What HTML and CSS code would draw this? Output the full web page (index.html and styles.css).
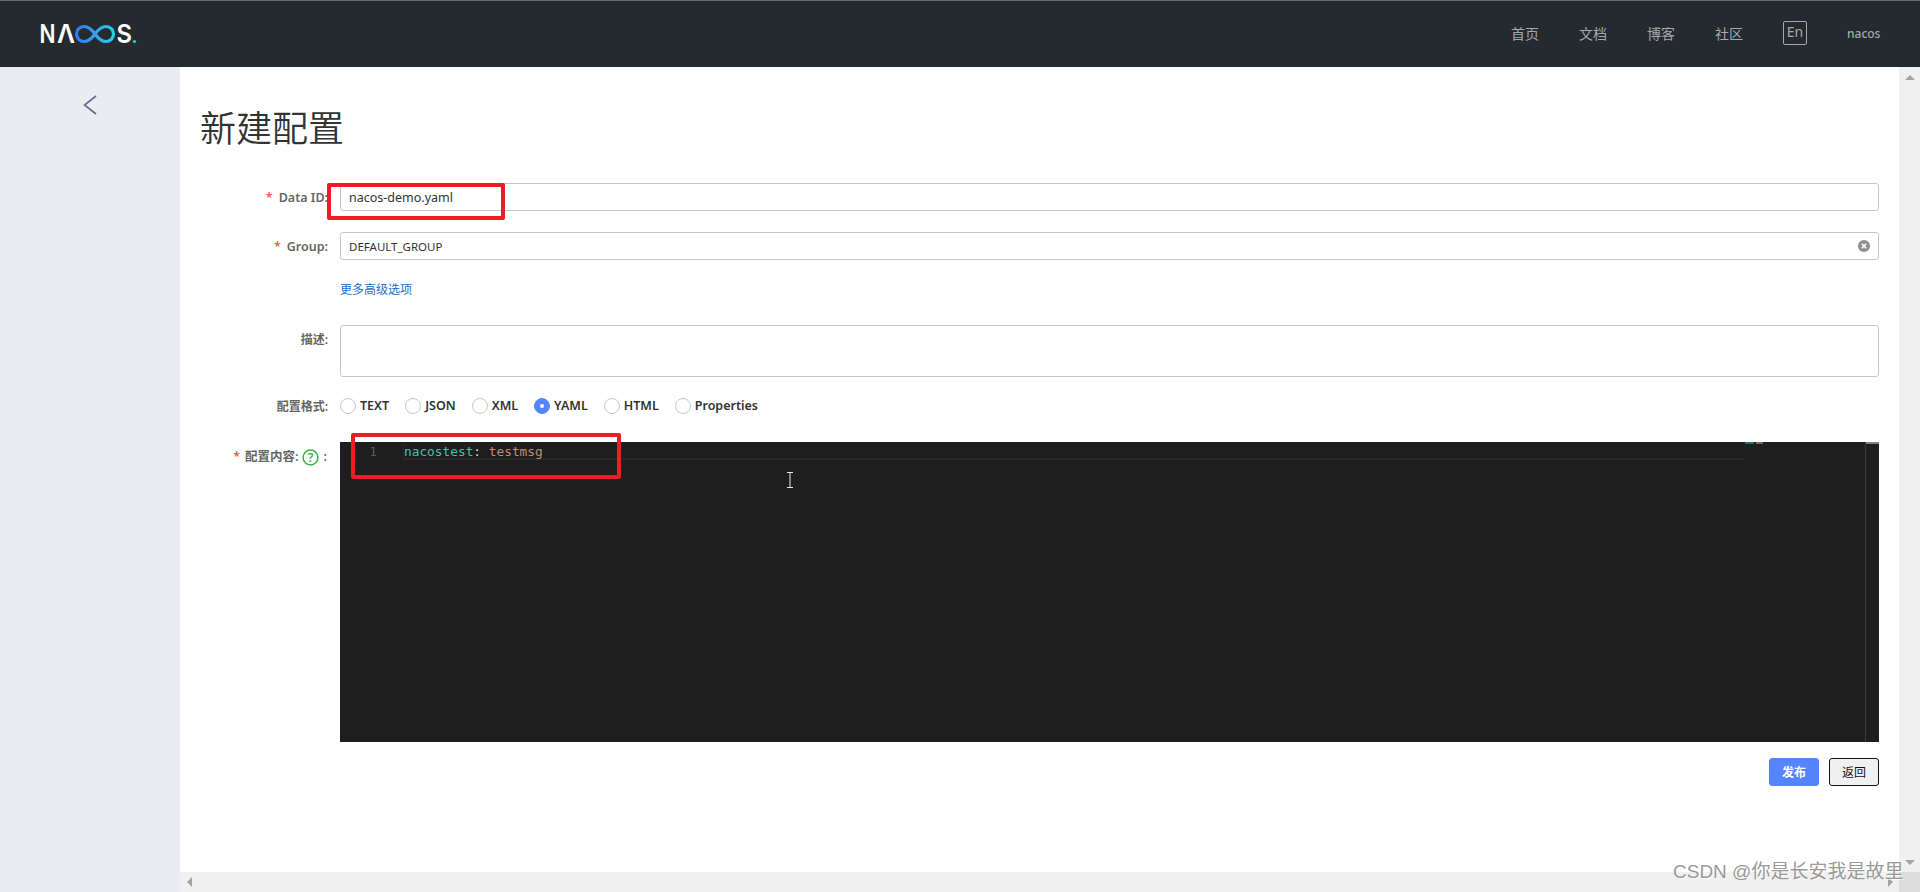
FILE: index.html
```html
<!DOCTYPE html>
<html lang="zh-CN">
<head>
<meta charset="utf-8">
<title>新建配置</title>
<link rel="stylesheet" href="styles.css">
</head>
<body>
<div class="page">
  <header class="topbar">
    <svg class="logo" width="100" height="36" viewBox="38 15 100 36" role="img" aria-label="NACOS">
      <defs>
        <linearGradient id="loop" x1="0" y1="0" x2="1" y2="0">
          <stop offset="0" stop-color="#2f7bf0"/>
          <stop offset="0.55" stop-color="#36a4f2"/>
          <stop offset="1" stop-color="#1fd3ee"/>
        </linearGradient>
      </defs>
      <text class="logo-letter" x="39.500" y="42" textLength="16" lengthAdjust="spacingAndGlyphs">N</text>
      <text class="logo-letter" x="57" y="42" textLength="18" lengthAdjust="spacingAndGlyphs">Λ</text>
      <path d="M95 33C91 27.500 87.500 25.500 84 25.500a7.500 7.500 0 0 0 0 15C87.500 40.500 91 38.500 95 33C99 27.500 102.500 25.500 106 25.500a7.500 7.500 0 0 1 0 15C102.500 40.500 99 38.500 95 33" fill="none" stroke="url(#loop)" stroke-width="3.200"/>
      <text class="logo-letter" x="116.500" y="42" textLength="15.500" lengthAdjust="spacingAndGlyphs">S</text>
      <circle cx="134.500" cy="40.500" r="1.600" fill="#1fd3ee"/>
    </svg>
    <nav class="nav">
      <a class="nav-link">首页</a>
      <a class="nav-link">文档</a>
      <a class="nav-link">博客</a>
      <a class="nav-link">社区</a>
      <a class="lang">En</a>
      <span class="user">nacos</span>
    </nav>
  </header>

  <div class="body">
    <aside class="sidebar">
      <svg class="back" width="14" height="20" viewBox="0 0 14 20"><polyline points="13,1 1.500,10 13,19" fill="none" stroke="#5f6f88" stroke-width="1.600"/></svg>
    </aside>

    <div class="center">
      <main class="content">
        <h1 class="title">新建配置</h1>
        <form class="form">
          <div class="row row-data">
            <label class="label"><span class="req">*</span>Data ID:</label>
            <div class="input input-lower">nacos-demo.yaml</div>
          </div>
          <div class="row row-group">
            <label class="label"><span class="req">*</span>Group:</label>
            <div class="input input-upper">DEFAULT_GROUP
              <svg class="clear" width="12" height="12" viewBox="0 0 12 12"><circle cx="6" cy="6" r="6" fill="#8f8f8f"/><path d="M3.800 3.800l4.400 4.400M8.200 3.800l-4.400 4.400" stroke="#fff" stroke-width="1.600"/></svg>
            </div>
          </div>
          <div class="row row-link">
            <span class="label"></span>
            <a class="more">更多高级选项</a>
          </div>
          <div class="row row-desc">
            <label class="label label-top">描述:</label>
            <div class="input input-area"></div>
          </div>
          <div class="row row-format">
            <label class="label label-format">配置格式:</label>
            <div class="radios">
              <span class="radio"><i class="dot"></i>TEXT</span>
              <span class="radio"><i class="dot"></i>JSON</span>
              <span class="radio"><i class="dot"></i>XML</span>
              <span class="radio"><i class="dot dot-on"></i>YAML</span>
              <span class="radio"><i class="dot"></i>HTML</span>
              <span class="radio"><i class="dot"></i>Properties</span>
            </div>
          </div>
          <div class="row row-editor">
            <label class="label label-editor"><span class="req">*</span>配置内容:
              <svg class="help" width="17" height="17" viewBox="0 0 17 17"><circle cx="8.500" cy="8.500" r="7.400" fill="#fff" stroke="#35b34a" stroke-width="1.500"/><text class="help-q" x="8.500" y="13" text-anchor="middle">?</text></svg>
              <span class="colon">:</span>
            </label>
            <div class="editor">
              <div class="gutter">1</div>
              <div class="lines">
                <div class="line"><span class="k">nacostest</span><span class="p">:</span> <span class="v">testmsg</span></div>
              </div>
              <div class="minimap"><i class="mini mini-k"></i><i class="mini mini-v"></i></div>
              <div class="vbar"><i class="vbar-thumb"></i></div>
              <svg class="ibeam" width="8" height="16" viewBox="0 0 8 16"><path d="M1 .5h6M4 .5v15M1 15.500h6" stroke="#e8e8e8" stroke-width="1" fill="none"/></svg>
            </div>
          </div>
          <div class="actions">
            <button type="button" class="btn btn-primary">发布</button>
            <button type="button" class="btn btn-back">返回</button>
          </div>
        </form>
      </main>
      <div class="hscroll">
        <i class="arrow arrow-left"></i>
        <i class="arrow arrow-right"></i>
      </div>
    </div>

    <div class="vscroll">
      <div class="vscroll-track">
        <i class="arrow arrow-up"></i>
        <i class="arrow arrow-down"></i>
      </div>
      <div class="corner"></div>
    </div>
  </div>

  <div class="mark mark-id"></div>
  <div class="mark mark-code"></div>
  <div class="watermark">CSDN @你是长安我是故里</div>
</div>
</body>
</html>
```

FILE: styles.css
```css
* { box-sizing: border-box; }
html, body { margin: 0; padding: 0; height: 100%; overflow: hidden; }
body { font-family: "Noto Sans", "Noto Sans CJK SC", sans-serif; font-size: 12px; color: #333; background: #fff; }

.page { position: relative; width: 1920px; height: 892px; display: flex; flex-direction: column; overflow: hidden; }

.topbar { flex: 0 0 67px; display: flex; align-items: center; justify-content: space-between; padding: 0 40px 0 38px; background: #252a2f; border-top: 1px solid #6a6a6a; }
.logo { display: block; margin-top: -1px; }
.logo-letter { font-family: "Inter", "Noto Sans", sans-serif; font-size: 25px; font-weight: 600; fill: #fff; }
.nav { display: flex; align-items: center; gap: 40px; color: #a6a8a9; }
.nav-link { font-size: 14px; line-height: 20px; }
.lang { width: 24px; height: 24px; border: 1px solid #a6a8a9; border-radius: 2px; font-size: 14px; line-height: 20px; text-align: center; margin-top: -3px; }
.user { font-size: 12px; line-height: 20px; width: 33px; font-weight: 500; }

.body { flex: 1; display: flex; min-height: 0; }
.sidebar { flex: 0 0 180px; background: #eaecf1; display: flex; justify-content: center; align-items: flex-start; padding: 28px 0 0 0; }
.back { display: block; }

.center { flex: 1; min-width: 0; display: flex; flex-direction: column; }
.content { flex: 1; padding: 37px 20px 0 20px; background: #fff; }
.title { margin: 0 0 29px 0; font-size: 36px; line-height: 50px; height: 50px; font-weight: 350; color: #333; }

.form { display: flex; flex-direction: column; }
.row { display: grid; grid-template-columns: 128px 1fr; column-gap: 12px; align-items: center; }
.row-data { height: 28px; margin-bottom: 21px; }
.row-group { height: 28px; margin-bottom: 21px; }
.row-link { height: 18px; margin-bottom: 26px; }
.row-desc { height: 52px; margin-bottom: 19px; align-items: start; }
.row-format { height: 20px; margin-bottom: 26px; }
.row-editor { height: 300px; margin-bottom: 16px; align-items: start; }

.label { display: block; padding-top: 2px; text-align: right; font-size: 12.500px; font-weight: 600; line-height: 18px; color: #666; white-space: nowrap; }
.label-top { padding-top: 6px; font-size: 12px; }
.label-format { font-size: 12px; }
.label-editor { display: flex; align-items: center; justify-content: flex-end; gap: 3px; padding-top: 6px; font-size: 12.500px; }
.req { color: #f55d3e; font-weight: 600; margin-right: 6px; }
.label-editor .req { margin-right: 2px; }
.colon { margin-left: 2px; margin-right: 1px; }
.help { display: block; }
.help-q { font-family: "Noto Sans", sans-serif; font-size: 12px; font-weight: 600; fill: #35b34a; }

.input { height: 28px; display: flex; align-items: center; justify-content: space-between; padding: 0 8px; background: #fff; border: 1px solid #c4c6cf; border-radius: 3px; color: #333; font-size: 12px; }
.input-lower { font-size: 12.500px; }
.input-upper { font-size: 11.500px; }
.input-area { height: 52px; }
.clear { display: block; }
.more { color: #1a6fc9; font-size: 12px; line-height: 18px; }

.radios { display: flex; align-items: center; gap: 16px; }
.radio { display: flex; align-items: center; gap: 4px; font-size: 12.500px; font-weight: 600; line-height: 20px; color: #333; }
.radio:nth-child(n+2) { margin-left: 0; }
.dot { display: block; width: 16px; height: 16px; border: 1px solid #c4c6cf; border-radius: 50%; background: #fff; position: relative; }
.dot-on { background: #5584ff; border-color: #5584ff; }
.dot-on::after { content: ""; position: absolute; left: 5px; top: 5px; width: 4px; height: 4px; border-radius: 50%; background: #fff; }

.editor { position: relative; height: 300px; display: flex; background: #1e1e1e; font-family: "DejaVu Sans Mono", "Liberation Mono", monospace; font-size: 12.800px; }
.gutter { flex: 0 0 63px; padding: 1px 26px 0 0; text-align: right; line-height: 18px; color: #5a5a5a; }
.lines { flex: 1; min-width: 0; }
.line { height: 18px; padding-top: 1px; line-height: 17px; border: solid #282828; border-width: 0 0 2px 1px; white-space: pre; color: #d4d4d4; }
.k { color: #3ec4a8; }
.p { color: #d4d4d4; }
.v { color: #c18c72; }
.minimap { flex: 0 0 120px; display: flex; align-items: flex-start; gap: 2px; }
.mini { display: block; height: 2px; }
.mini-k { width: 9px; background: #24705f; }
.mini-v { width: 7px; background: #8a6250; }
.vbar { flex: 0 0 14px; border-left: 1px solid #3c3c3c; }
.vbar-thumb { display: block; height: 2px; background: #808080; }
.ibeam { position: absolute; left: 446px; top: 30px; }

.actions { display: flex; justify-content: flex-end; gap: 10px; }
.btn { width: 50px; height: 28px; padding: 0; font-family: inherit; font-size: 12px; border-radius: 3px; }
.btn-primary { background: #5584ff; border: 1px solid #5584ff; color: #fff; font-weight: 600; }
.btn-back { background: #f0f0f0; border: 1px solid #111; color: #111; }

.hscroll { flex: 0 0 20px; display: flex; justify-content: space-between; align-items: center; padding: 0 6px 0 7px; background: #f0f0f0; }
.vscroll { flex: 0 0 21px; display: flex; flex-direction: column; }
.vscroll-track { flex: 1; display: flex; flex-direction: column; justify-content: space-between; align-items: center; padding: 8px 0 7px 0; background: #f0f0f0; }
.corner { flex: 0 0 20px; background: #dcdcdc; }

.arrow { display: block; width: 0; height: 0; border-style: solid; border-color: transparent; }
.arrow-up { border-width: 0 5px 5px 5px; border-bottom-color: #a3a3a3; }
.arrow-down { border-width: 5px 5px 0 5px; border-top-color: #a3a3a3; }
.arrow-left { border-width: 5px 5px 5px 0; border-right-color: #a3a3a3; }
.arrow-right { border-width: 5px 0 5px 5px; border-left-color: #a3a3a3; }

.mark { position: absolute; border: 4px solid #ee1c25; border-radius: 2px; pointer-events: none; }
.mark-id { left: 327px; top: 183px; width: 178px; height: 37px; }
.mark-code { left: 351px; top: 433px; width: 270px; height: 46px; }

.watermark { position: absolute; left: 1673px; top: 858px; font-family: "Liberation Sans", "Noto Sans CJK SC", sans-serif; font-size: 19px; line-height: 28px; color: #9a9a9a; white-space: nowrap; text-shadow: 1px 1px 1px rgba(255,255,255,.7); }
```
